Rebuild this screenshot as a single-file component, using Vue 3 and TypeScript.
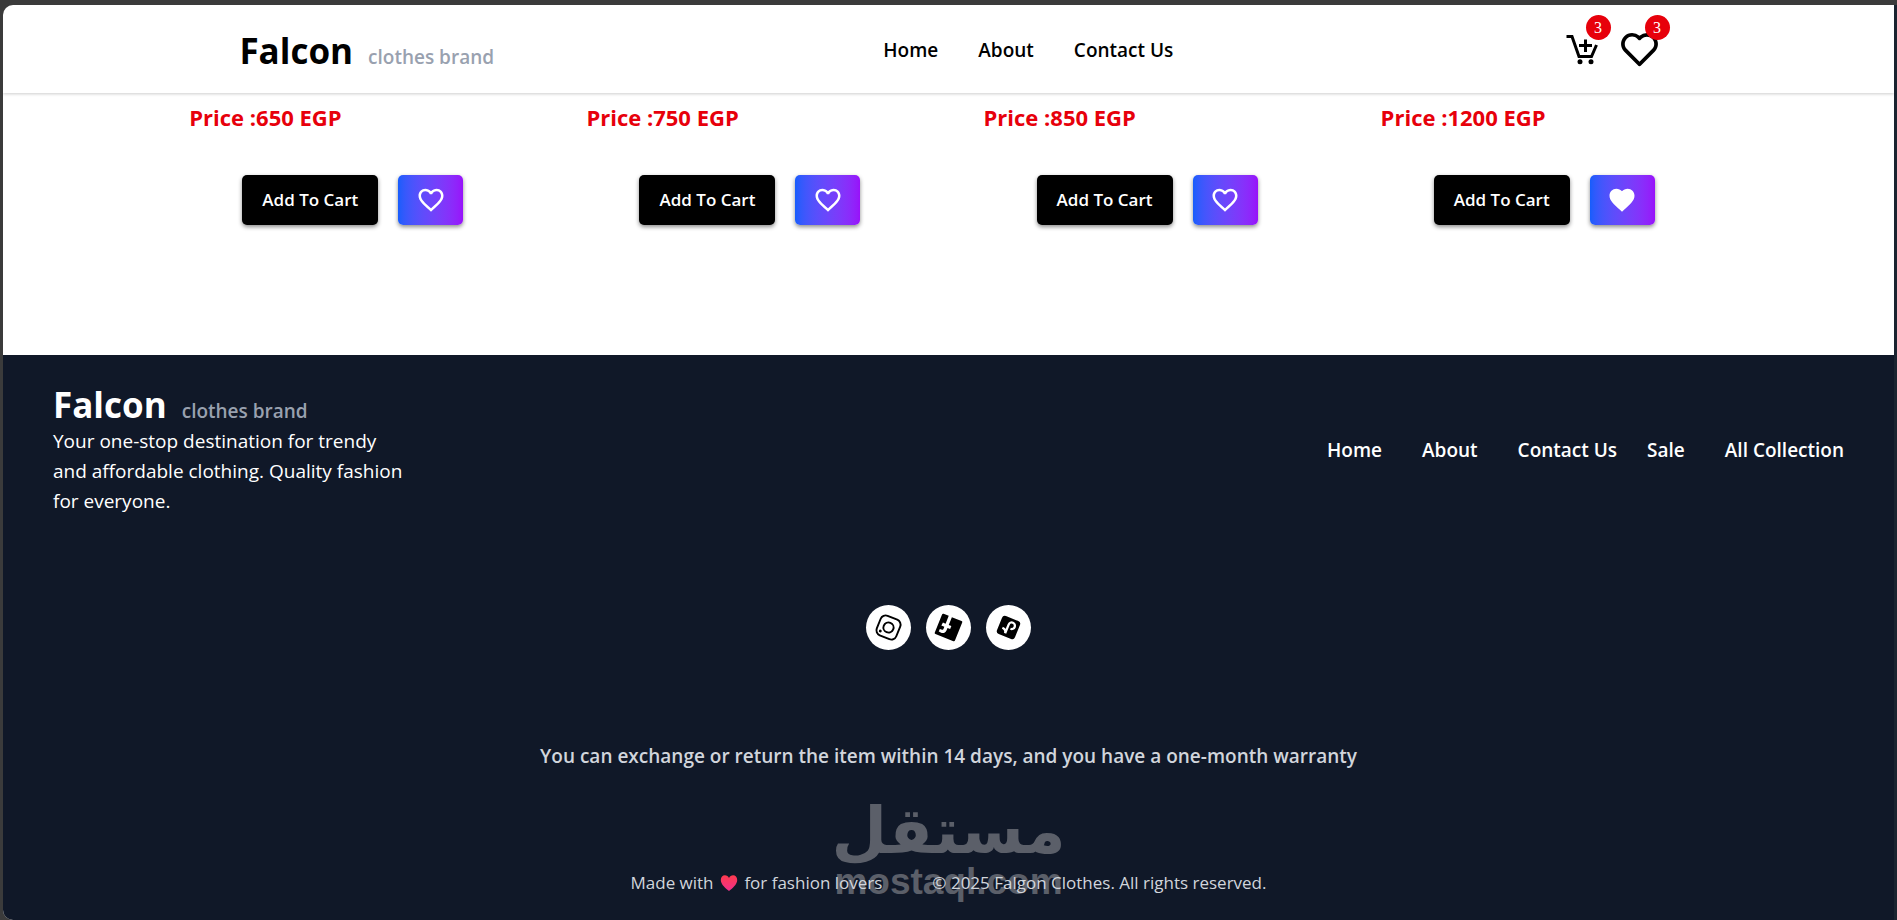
<script setup lang="ts">
import { ref, computed } from 'vue'

interface Product {
  id: number
  price: number
  liked: boolean
}

const products = ref<Product[]>([
  { id: 1, price: 650, liked: false },
  { id: 2, price: 750, liked: false },
  { id: 3, price: 850, liked: false },
  { id: 4, price: 1200, liked: true },
])

const cartCount = ref(3)
const earlierLikes = 2
const wishCount = computed(() => earlierLikes + products.value.filter((p) => p.liked).length)

const mainLinks = ['Home', 'About', 'Contact Us']
const shopLinks = ['Sale', 'All Collection']
</script>

<template>
  <div class="frame">
    <div class="page">
      <header class="header">
        <a class="brand" href="#"><span class="brand-name">Falcon</span><span class="brand-tag">clothes brand</span></a>
        <nav class="links" aria-label="Main">
          <a v-for="link in mainLinks" :key="link" href="#">{{ link }}</a>
        </nav>
        <div class="actions">
          <a class="action" href="#" aria-label="Cart">
            <svg class="cart" viewBox="0 0 36 36" fill="none" stroke="currentColor" stroke-width="3" aria-hidden="true">
              <path d="M3.500 5.500H9L16 25.500H28.500L33.500 14" />
              <path d="M22.500 8.500v12.500M16 14.500h13" />
              <circle cx="17" cy="30.800" r="2.500" fill="currentColor" stroke="none" />
              <circle cx="28" cy="30.800" r="2.500" fill="currentColor" stroke="none" />
            </svg>
            <span class="badge">{{ cartCount }}</span>
          </a>
          <a class="action" href="#" aria-label="Favourites">
            <svg class="wish" viewBox="2 2 20 20" fill="currentColor" aria-hidden="true">
              <path d="M12 4.595a5.904 5.904 0 0 0-3.996-1.558 5.942 5.942 0 0 0-4.213 1.758c-2.353 2.363-2.352 6.059.002 8.412l7.332 7.332c.17.299.498.492.875.492a.99.99 0 0 0 .792-.409l7.415-7.415c2.354-2.354 2.354-6.049-.002-8.416a5.938 5.938 0 0 0-4.209-1.754A5.906 5.906 0 0 0 12 4.595zm6.791 1.61c1.563 1.571 1.564 4.025.002 5.588L12 18.586l-6.793-6.793c-1.562-1.563-1.561-4.017-.002-5.584.76-.756 1.754-1.172 2.799-1.172s2.035.416 2.789 1.17l.5.5a.999.999 0 0 0 1.414 0l.5-.5c1.512-1.509 4.074-1.505 5.584-.002z" />
            </svg>
            <span class="badge">{{ wishCount }}</span>
          </a>
        </div>
      </header>

      <main class="products">
        <article v-for="product in products" :key="product.id" class="product">
          <p class="price">Price :{{ product.price }} EGP</p>
          <div class="buttons">
            <button class="add" type="button" @click="cartCount++">Add To Cart</button>
            <button class="like" type="button" aria-label="Favourite" :aria-pressed="product.liked" @click="product.liked = !product.liked">
              <svg viewBox="0 0 24 24" fill="currentColor" aria-hidden="true">
                <path v-if="product.liked" d="M12 21.350l-1.450-1.320C5.400 15.360 2 12.280 2 8.500 2 5.420 4.420 3 7.500 3c1.740 0 3.410.810 4.500 2.090C13.090 3.810 14.760 3 16.500 3 19.580 3 22 5.420 22 8.500c0 3.780-3.400 6.860-8.550 11.540L12 21.350z" />
                <path v-else d="M16.500 3c-1.740 0-3.410.810-4.500 2.090C10.910 3.810 9.240 3 7.500 3 4.420 3 2 5.420 2 8.500c0 3.780 3.400 6.860 8.550 11.540L12 21.350l1.450-1.320C18.600 15.360 22 12.280 22 8.500 22 5.420 19.580 3 16.500 3zm-4.400 15.550l-.1.1-.1-.1C7.140 14.240 4 11.390 4 8.500 4 6.500 5.500 5 7.500 5c1.540 0 3.040.990 3.570 2.360h1.870C13.460 5.990 14.960 5 16.500 5c2 0 3.500 1.500 3.500 3.500 0 2.890-3.140 5.740-7.900 10.050z" />
              </svg>
            </button>
          </div>
        </article>
      </main>

      <footer class="footer">
        <div class="footer-top">
          <div class="about">
            <a class="brand" href="#"><span class="brand-name">Falcon</span><span class="brand-tag">clothes brand</span></a>
            <p>Your one-stop destination for trendy and affordable clothing. Quality fashion for everyone.</p>
          </div>
          <nav class="footer-links" aria-label="Footer">
            <div class="links">
              <a v-for="link in mainLinks" :key="link" href="#">{{ link }}</a>
            </div>
            <div class="links">
              <a v-for="link in shopLinks" :key="link" href="#">{{ link }}</a>
            </div>
          </nav>
        </div>

        <div class="social">
          <a href="#" aria-label="Instagram">
            <svg viewBox="0 0 24 24" fill="none" stroke="currentColor" stroke-width="1.600" aria-hidden="true">
              <rect x="3.300" y="3.300" width="17.400" height="17.400" rx="4.400" />
              <circle cx="12" cy="12" r="4.200" />
              <circle cx="17.200" cy="6.800" r="1.200" fill="currentColor" stroke="none" />
            </svg>
          </a>
          <a href="#" aria-label="Facebook">
            <svg viewBox="0 0 24 24" fill="currentColor" aria-hidden="true">
              <path d="M20 3H4a1 1 0 0 0-1 1v16a1 1 0 0 0 1 1h8.615v-6.960h-2.338v-2.725h2.338v-2c0-2.325 1.420-3.592 3.500-3.592.699-.002 1.399.034 2.095.107v2.420h-1.435c-1.128 0-1.348.538-1.348 1.325v1.735h2.697l-.350 2.725h-2.348V21H20a1 1 0 0 0 1-1V4a1 1 0 0 0-1-1z" />
            </svg>
          </a>
          <a href="#" aria-label="TikTok">
            <svg viewBox="0 0 24 24" fill="none" aria-hidden="true">
              <rect x="4" y="4" width="16" height="16" rx="2.500" fill="currentColor" />
              <path d="M12.800 6.500v7.800a2.700 2.700 0 1 1-2.700-2.700M12.800 6.500c.2 2 1.700 3.300 3.800 3.400" stroke="#fff" stroke-width="1.900" />
            </svg>
          </a>
        </div>

        <p class="warranty">You can exchange or return the item within 14 days, and you have a one-month warranty</p>

        <div class="legal">
          <div class="watermark" aria-hidden="true">
            <span class="mark-ar" lang="ar" dir="rtl">مستقل</span>
            <span class="mark-en">mostaql.com</span>
          </div>
          <p>
            Made with
            <svg class="love" viewBox="0 0 18 18" role="img" aria-label="love">
              <defs>
                <linearGradient id="love-fill" x1="0" y1="0" x2="0" y2="1">
                  <stop offset="0" stop-color="#ff3b4e" />
                  <stop offset="1" stop-color="#f0308c" />
                </linearGradient>
              </defs>
              <path fill="url(#love-fill)" d="M9 17C6 14.500.800 10.500.800 5.900.800 3 2.700 1.300 4.900 1.300 6.700 1.300 8.200 2.300 9 4c.8-1.700 2.300-2.700 4.100-2.700 2.200 0 4.100 1.700 4.100 4.600C17.200 10.500 12 14.500 9 17z" />
            </svg>
            for fashion lovers
          </p>
          <p>© 2025 Falgon Clothes. All rights reserved.</p>
        </div>
      </footer>
    </div>
  </div>
</template>

<style>
body {
  margin: 0;
  background: #3b3b3b;
}
</style>

<style scoped>
.frame {
  box-sizing: border-box;
  display: flex;
  min-height: 100vh;
  padding: 5px 0 0 3px;
  background: #3b3b3b;
  font-family: 'Segoe UI', 'Open Sans', 'Noto Sans', sans-serif;
}

.page {
  flex: 1;
  display: flex;
  flex-direction: column;
  border-right: 3px solid #1a2430;
  border-radius: 10px 0 0 10px;
  background: #fff;
  overflow: hidden;
}

p {
  margin: 0;
}

a {
  color: inherit;
  text-decoration: none;
}

.header {
  display: flex;
  align-items: center;
  justify-content: space-between;
  height: 88px;
  padding: 0 12.5%;
  box-shadow: 0 1px 3px rgba(0, 0, 0, 0.2);
}

.brand {
  display: flex;
  align-items: baseline;
  gap: 15px;
  line-height: 42px;
}

.header .brand {
  padding-top: 4px;
}

.brand-name {
  font-size: 35px;
  font-weight: 700;
}

.brand-tag {
  color: #99a1af;
  font-size: 19px;
  font-weight: 600;
  line-height: 20px;
}

.links {
  display: flex;
  gap: 40px;
  font-size: 19px;
  font-weight: 600;
  line-height: 30px;
}

.header .links {
  padding-top: 2px;
}

.actions {
  display: flex;
  align-items: center;
  gap: 22px;
}

.action {
  position: relative;
  display: flex;
}

.cart {
  width: 36px;
  height: 36px;
}

.wish {
  width: 37px;
  height: 37px;
}

.badge {
  position: absolute;
  top: -16px;
  right: -12px;
  width: 25px;
  height: 25px;
  border-radius: 50%;
  background: #e7000b;
  color: #fff;
  font: 16px/26px 'Liberation Serif', serif;
  text-align: center;
}

.products {
  display: grid;
  grid-template-columns: repeat(4, 1fr);
  padding: 10px 8% 130px;
}

.price {
  padding-left: 35px;
  color: #e7000b;
  font-size: 22px;
  font-weight: 700;
  line-height: 28px;
}

.buttons {
  display: flex;
  justify-content: center;
  gap: 20px;
  margin-top: 44px;
}

.buttons button {
  height: 50px;
  border: 0;
  border-radius: 5px;
  box-shadow: 0 2px 4px rgba(0, 0, 0, 0.45);
  color: #fff;
  cursor: pointer;
}

.add {
  padding: 0 20px;
  background: #000;
  font: 600 17px/24px 'Segoe UI', 'Open Sans', 'Noto Sans', sans-serif;
}

.like {
  display: flex;
  align-items: center;
  justify-content: center;
  width: 65px;
  padding: 0;
  background: linear-gradient(90deg in oklab, #155dfc, #9810fa);
}

.like svg {
  width: 30px;
  height: 30px;
}

.footer {
  flex: 1;
  padding: 29px 50px 16px;
  background: #101828;
  color: #fff;
}

.footer-top {
  display: flex;
  align-items: center;
  justify-content: space-between;
}

.about {
  width: 360px;
}

.about p {
  font-size: 19px;
  line-height: 30px;
}

.footer-links {
  display: flex;
  gap: 30px;
}

.social {
  display: flex;
  justify-content: center;
  gap: 15px;
  margin-top: 89px;
}

.social a {
  display: flex;
  align-items: center;
  justify-content: center;
  width: 45px;
  height: 45px;
  border-radius: 50%;
  background: #fff;
  color: #000;
}

.social svg {
  width: 29px;
  height: 29px;
  transform: rotate(202deg);
}

.warranty {
  margin-top: 91px;
  color: #d1d5dc;
  font-size: 19px;
  font-weight: 600;
  line-height: 30px;
  text-align: center;
}

.legal {
  position: relative;
  display: flex;
  justify-content: center;
  gap: 50px;
  margin-top: 98px;
  color: #d1d5dc;
  font-size: 17px;
  line-height: 28px;
}

.legal p {
  position: relative;
}

.love {
  width: 18px;
  height: 18px;
  margin: 0 2px;
  vertical-align: -3px;
}

.watermark {
  position: absolute;
  bottom: -5px;
  left: 50%;
  display: flex;
  flex-direction: column;
  align-items: center;
  transform: translateX(-50%);
  color: #5b5f69;
}

.mark-ar {
  font: 700 64px/62px 'DejaVu Sans', sans-serif;
}

.mark-en {
  font: 700 37px/40px 'Liberation Sans', sans-serif;
}
</style>
